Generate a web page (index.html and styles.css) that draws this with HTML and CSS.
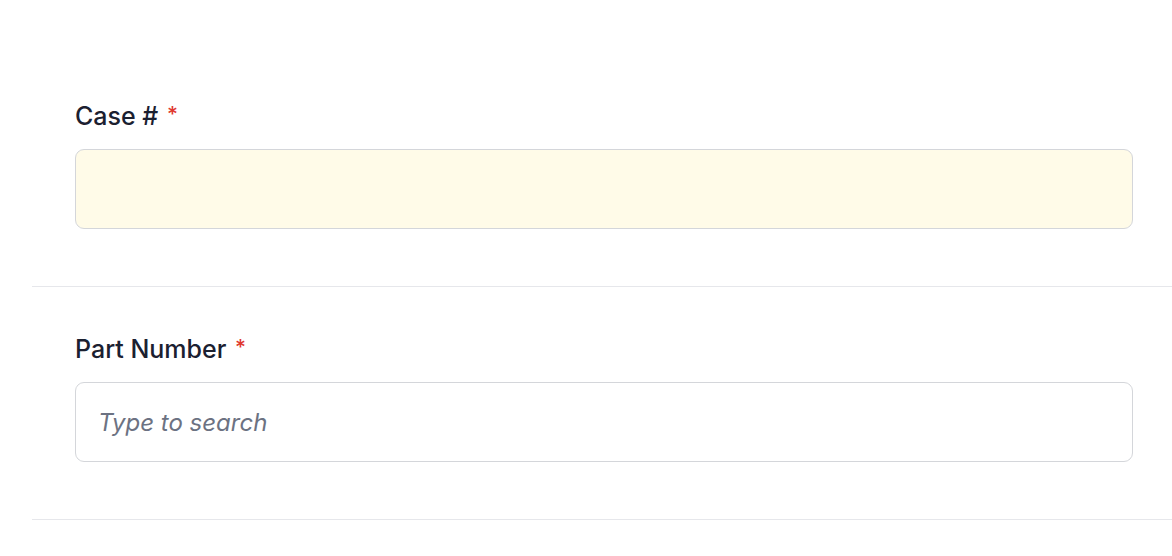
FILE: index.html
```html
<!DOCTYPE html>
<html>
<head>
<meta charset="utf-8">
<link rel="stylesheet" href="styles.css">
</head>
<body>
<div class="form">
  <div class="field">
    <label class="label">Case # <span class="req">*</span></label>
    <input class="input input-filled" type="text">
  </div>
  <div class="field">
    <label class="label">Part Number <span class="req">*</span></label>
    <input class="input" type="text" placeholder="Type to search">
  </div>
</div>
</body>
</html>
```
FILE: styles.css
```css
html, body {
  margin: 0;
  padding: 0;
  background: #ffffff;
}
body {
  font-family: Inter, "Noto Sans", sans-serif;
  color: #1b2030;
}
.form {
  padding-top: 54px;
  padding-left: 32px;
}
.field {
  display: flex;
  flex-direction: column;
  padding: 46px 39px 57px 43px;
  border-bottom: 1px solid #e6e7eb;
}
.label {
  font-size: 25px;
  line-height: 32px;
  font-weight: 450;
  color: #1b2030;
  margin-bottom: 17px;
}
.req {
  color: #e0382e;
  font-size: 21px;
  vertical-align: top;
  position: relative;
  top: -1px;
  margin-left: 2px;
}
.input {
  box-sizing: border-box;
  height: 80px;
  width: 100%;
  border: 1px solid #d4d6da;
  border-radius: 9px;
  background: #ffffff;
  font-family: Inter, "Noto Sans", sans-serif;
  font-size: 24px;
  padding: 0 22px;
  margin: 0;
  outline: none;
  color: #1b2030;
}
.input-filled {
  background: #fffbe8;
}
.input::placeholder {
  font-style: italic;
  color: #6c7282;
}
```
